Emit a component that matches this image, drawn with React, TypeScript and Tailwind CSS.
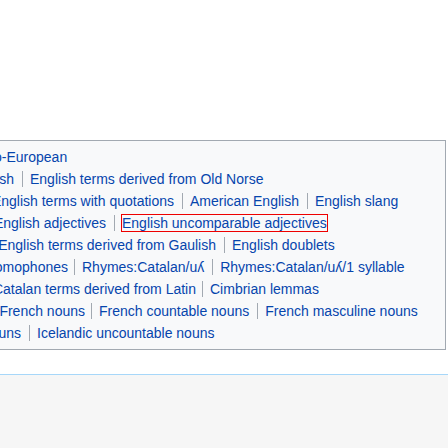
type Row = { lead: string; w?: string; gap?: string; items: string[]; boxed?: number };

// lead = the link cut off at the left edge; w = width of its box, so the first divider lands in place
const rows: Row[] = [
  { lead: "o-European", items: [] },
  { lead: "sh", w: "w-[14px]", items: ["English terms derived from Old Norse"] },
  { lead: "English terms with quotations", w: "w-[174px]", items: ["American English", "English slang"] },
  { lead: "English adjectives", w: "w-[106px]", items: ["English uncomparable adjectives"], boxed: 0 },
  { lead: "English terms derived from Gaulish", w: "w-[216px]", items: ["English doublets"] },
  { lead: "homophones", w: "w-[68px]", gap: "ml-[6px]", items: ["Rhymes:Catalan/uʎ", "Rhymes:Catalan/uʎ/1 syllable"] },
  { lead: "Catalan terms derived from Latin", w: "w-[196px]", gap: "ml-[6px]", items: ["Cimbrian lemmas"] },
  { lead: "French nouns", w: "w-[85px]", gap: "ml-[6px]", items: ["French countable nouns", "French masculine nouns"] },
  { lead: "nouns", w: "w-[21px]", items: ["Icelandic uncountable nouns"] },
];

export default function App() {
  return (
    <div
      className="w-[448px] h-[448px] bg-white overflow-hidden flex flex-col"
      style={{ fontFamily: '"Liberation Sans", Arial, sans-serif' }}
    >
      <div className="h-[140px] shrink-0" />
      <div className="mr-[2px] border border-l-0 border-[#a2a9b1] bg-[#f8f9fa] py-[5px] overflow-hidden shrink-0">
        {rows.map((row, i) => (
          <div key={i} className="h-[22px] flex items-center whitespace-nowrap text-[14px] leading-[16px] text-[#0645ad]">
            {row.w ? (
              <div className={`${row.w} shrink-0 flex justify-end overflow-hidden`}>
                <span className="shrink-0">{row.lead}</span>
              </div>
            ) : (
              <span className="-ml-[6px]">{row.lead}</span>
            )}
            {row.items.map((item, j) => (
              <span
                key={j}
                className={`${j === 0 && row.gap ? row.gap : "ml-[8px]"} border-l border-[#a2a9b1] ${row.boxed === j ? "pl-[6px]" : "pl-[7px]"} shrink-0`}
              >
                {row.boxed === j ? <span className="border border-[#ee0000]">{item}</span> : item}
              </span>
            ))}
          </div>
        ))}
      </div>
      <div className="h-[24px] shrink-0" />
      <div className="flex-1 border-t border-[#a7d7f9] bg-[#f6f6f6]" />
    </div>
  );
}
